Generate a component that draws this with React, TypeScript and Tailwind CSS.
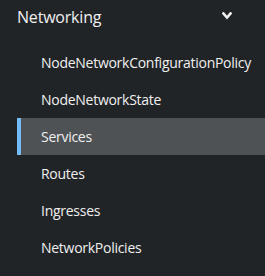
const ITEMS = [
  "NodeNetworkConfigurationPolicy",
  "NodeNetworkState",
  "Services",
  "Routes",
  "Ingresses",
  "NetworkPolicies",
];

export default function App() {
  return (
    <nav
      className="w-[265px] h-[276px] bg-[#212427] text-[#f0f0f0] overflow-hidden"
      style={{ fontFamily: '"Open Sans", "Liberation Sans", sans-serif' }}
    >
      {/* Section header */}
      <div className="h-[33px] flex items-center justify-between pl-[17px] pr-[33px] text-[16px] tracking-[-0.2px]">
        <span>Networking</span>
        <svg width="10" height="8" viewBox="0 0 10 8" className="mb-[1px]">
          <polyline points="1.5,1.5 5,5.5 8.5,1.5" fill="none" stroke="#f0f0f0" strokeWidth="2.6" strokeLinecap="square" />
        </svg>
      </div>

      <ul className="mt-[11px] pl-[17px]">
        {ITEMS.map((item) => {
          const active = item === "Services";
          return (
            <li
              key={item}
              className={
                active
                  ? "h-[37px] flex items-center pl-[20px] border-l-4 border-[#73bcf7] bg-[#4f5255] text-[14px] tracking-[-0.27px]"
                  : "h-[37px] flex items-center pl-[24px] text-[14px] tracking-[-0.27px]"
              }
            >
              {item}
            </li>
          );
        })}
      </ul>
    </nav>
  );
}
